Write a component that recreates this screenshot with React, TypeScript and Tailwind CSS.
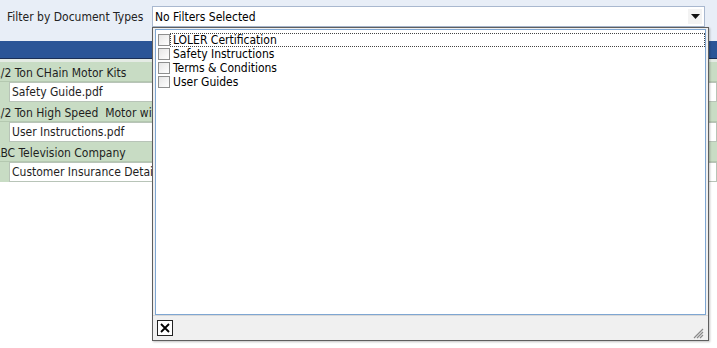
import React from "react";

const items = ["LOLER Certification", "Safety Instructions", "Terms & Conditions", "User Guides"];

function Checkbox() {
  return (
    <div className="w-[12px] h-[12px] border border-[#8e8f8f] bg-gradient-to-br from-[#e6e6e6] to-white shrink-0" />
  );
}

export default function App() {
  return (
    <div
      className="relative w-[717px] h-[348px] overflow-hidden bg-white text-[12px] text-[#1e1e1e]"
      style={{ fontFamily: "'DejaVu Sans Condensed', 'DejaVu Sans', sans-serif" }}
    >
      {/* top filter bar */}
      <div className="h-[41px] bg-[#e8eef7] flex items-start pt-[6px]">
        <div className="w-[152px] pl-[7px] h-[22px] flex items-center text-[#222] text-[12px]">
          Filter by Document Types
        </div>
        <div className="w-[553px] h-[21px] border border-[#a9b8cf] bg-white flex items-center justify-between pl-[2px] pr-[2px]">
          <span className="text-[12px] text-black">No Filters Selected</span>
          <div className="w-[14px] h-[15px] bg-[#f3f3f3] flex items-center justify-center">
            <svg width="9" height="5" viewBox="0 0 9 5">
              <polygon points="0,0 9,0 4.5,5" fill="#111" />
            </svg>
          </div>
        </div>
      </div>
      {/* blue band */}
      <div className="h-[18px] bg-[#2b5597] border-b border-[#1b2f55]" />
      <div className="h-[3px] bg-[#e4ebe4]" />
      {/* rows */}
      <div className="bg-[#c8dcc4] text-[12px]">
        <div className="h-[20px] flex items-center pt-[2px] ml-[-6px] border-b border-[#b4c8b0]">1/2 Ton CHain Motor Kits</div>
        <div className="h-[20px] flex items-center pl-[9px]">
          <div className="w-[708px] h-[20px] bg-white border border-[#b8c4b8] flex items-center pl-[2px]">Safety Guide.pdf</div>
        </div>
        <div className="h-[20px] flex items-center pt-[2px] ml-[-6px] border-b border-[#b4c8b0] whitespace-pre">1/2 Ton High Speed  Motor with</div>
        <div className="h-[20px] flex items-center pl-[9px]">
          <div className="w-[708px] h-[20px] bg-white border border-[#b8c4b8] flex items-center pl-[2px]">User Instructions.pdf</div>
        </div>
        <div className="h-[20px] flex items-center pt-[2px] ml-[-7px] border-b border-[#b4c8b0]">ABC Television Company</div>
        <div className="h-[20px] flex items-center pl-[9px]">
          <div className="w-[708px] h-[20px] bg-white border border-[#b8c4b8] flex items-center pl-[2px]">Customer Insurance Details</div>
        </div>
      </div>

      {/* popup */}
      <div className="absolute left-[152px] top-[27px] w-[557px] h-[314px] border border-[#5e5e5e] bg-[#f0f0f0] flex flex-col shadow-[1px_1px_2px_rgba(0,0,0,0.25)]">
        <div className="mx-[2px] mt-[1px] h-[286px] border border-[#7ea6d2] bg-white flex flex-col pt-[3px]">
          {items.map((t, i) => (
            <div key={t} className="h-[14px] flex items-center pl-[2px]">
              <Checkbox />
              <div
                className={
                  "flex-1 h-[14px] flex items-center pl-[2px] text-[12px] text-black " +
                  (i === 0 ? "border border-dotted border-[#444]" : "border border-transparent")
                }
              >
                {t}
              </div>
            </div>
          ))}
        </div>
        <div className="flex-1 flex items-center justify-between px-[4px] border-t border-[#d8d8d8]">
          <div className="w-[16px] h-[16px] border border-[#222] bg-white flex items-center justify-center">
            <svg width="10" height="10" viewBox="0 0 10 10">
              <path d="M1 1 L9 9 M9 1 L1 9" stroke="#000" strokeWidth="1.8" />
            </svg>
          </div>
          <svg width="12" height="12" viewBox="0 0 12 12" className="self-end mb-[1px]">
            <path d="M11 2 L2 11 M11 5 L5 11 M11 8 L8 11" stroke="#8a8a8a" strokeWidth="1.2" />
          </svg>
        </div>
      </div>
    </div>
  );
}
